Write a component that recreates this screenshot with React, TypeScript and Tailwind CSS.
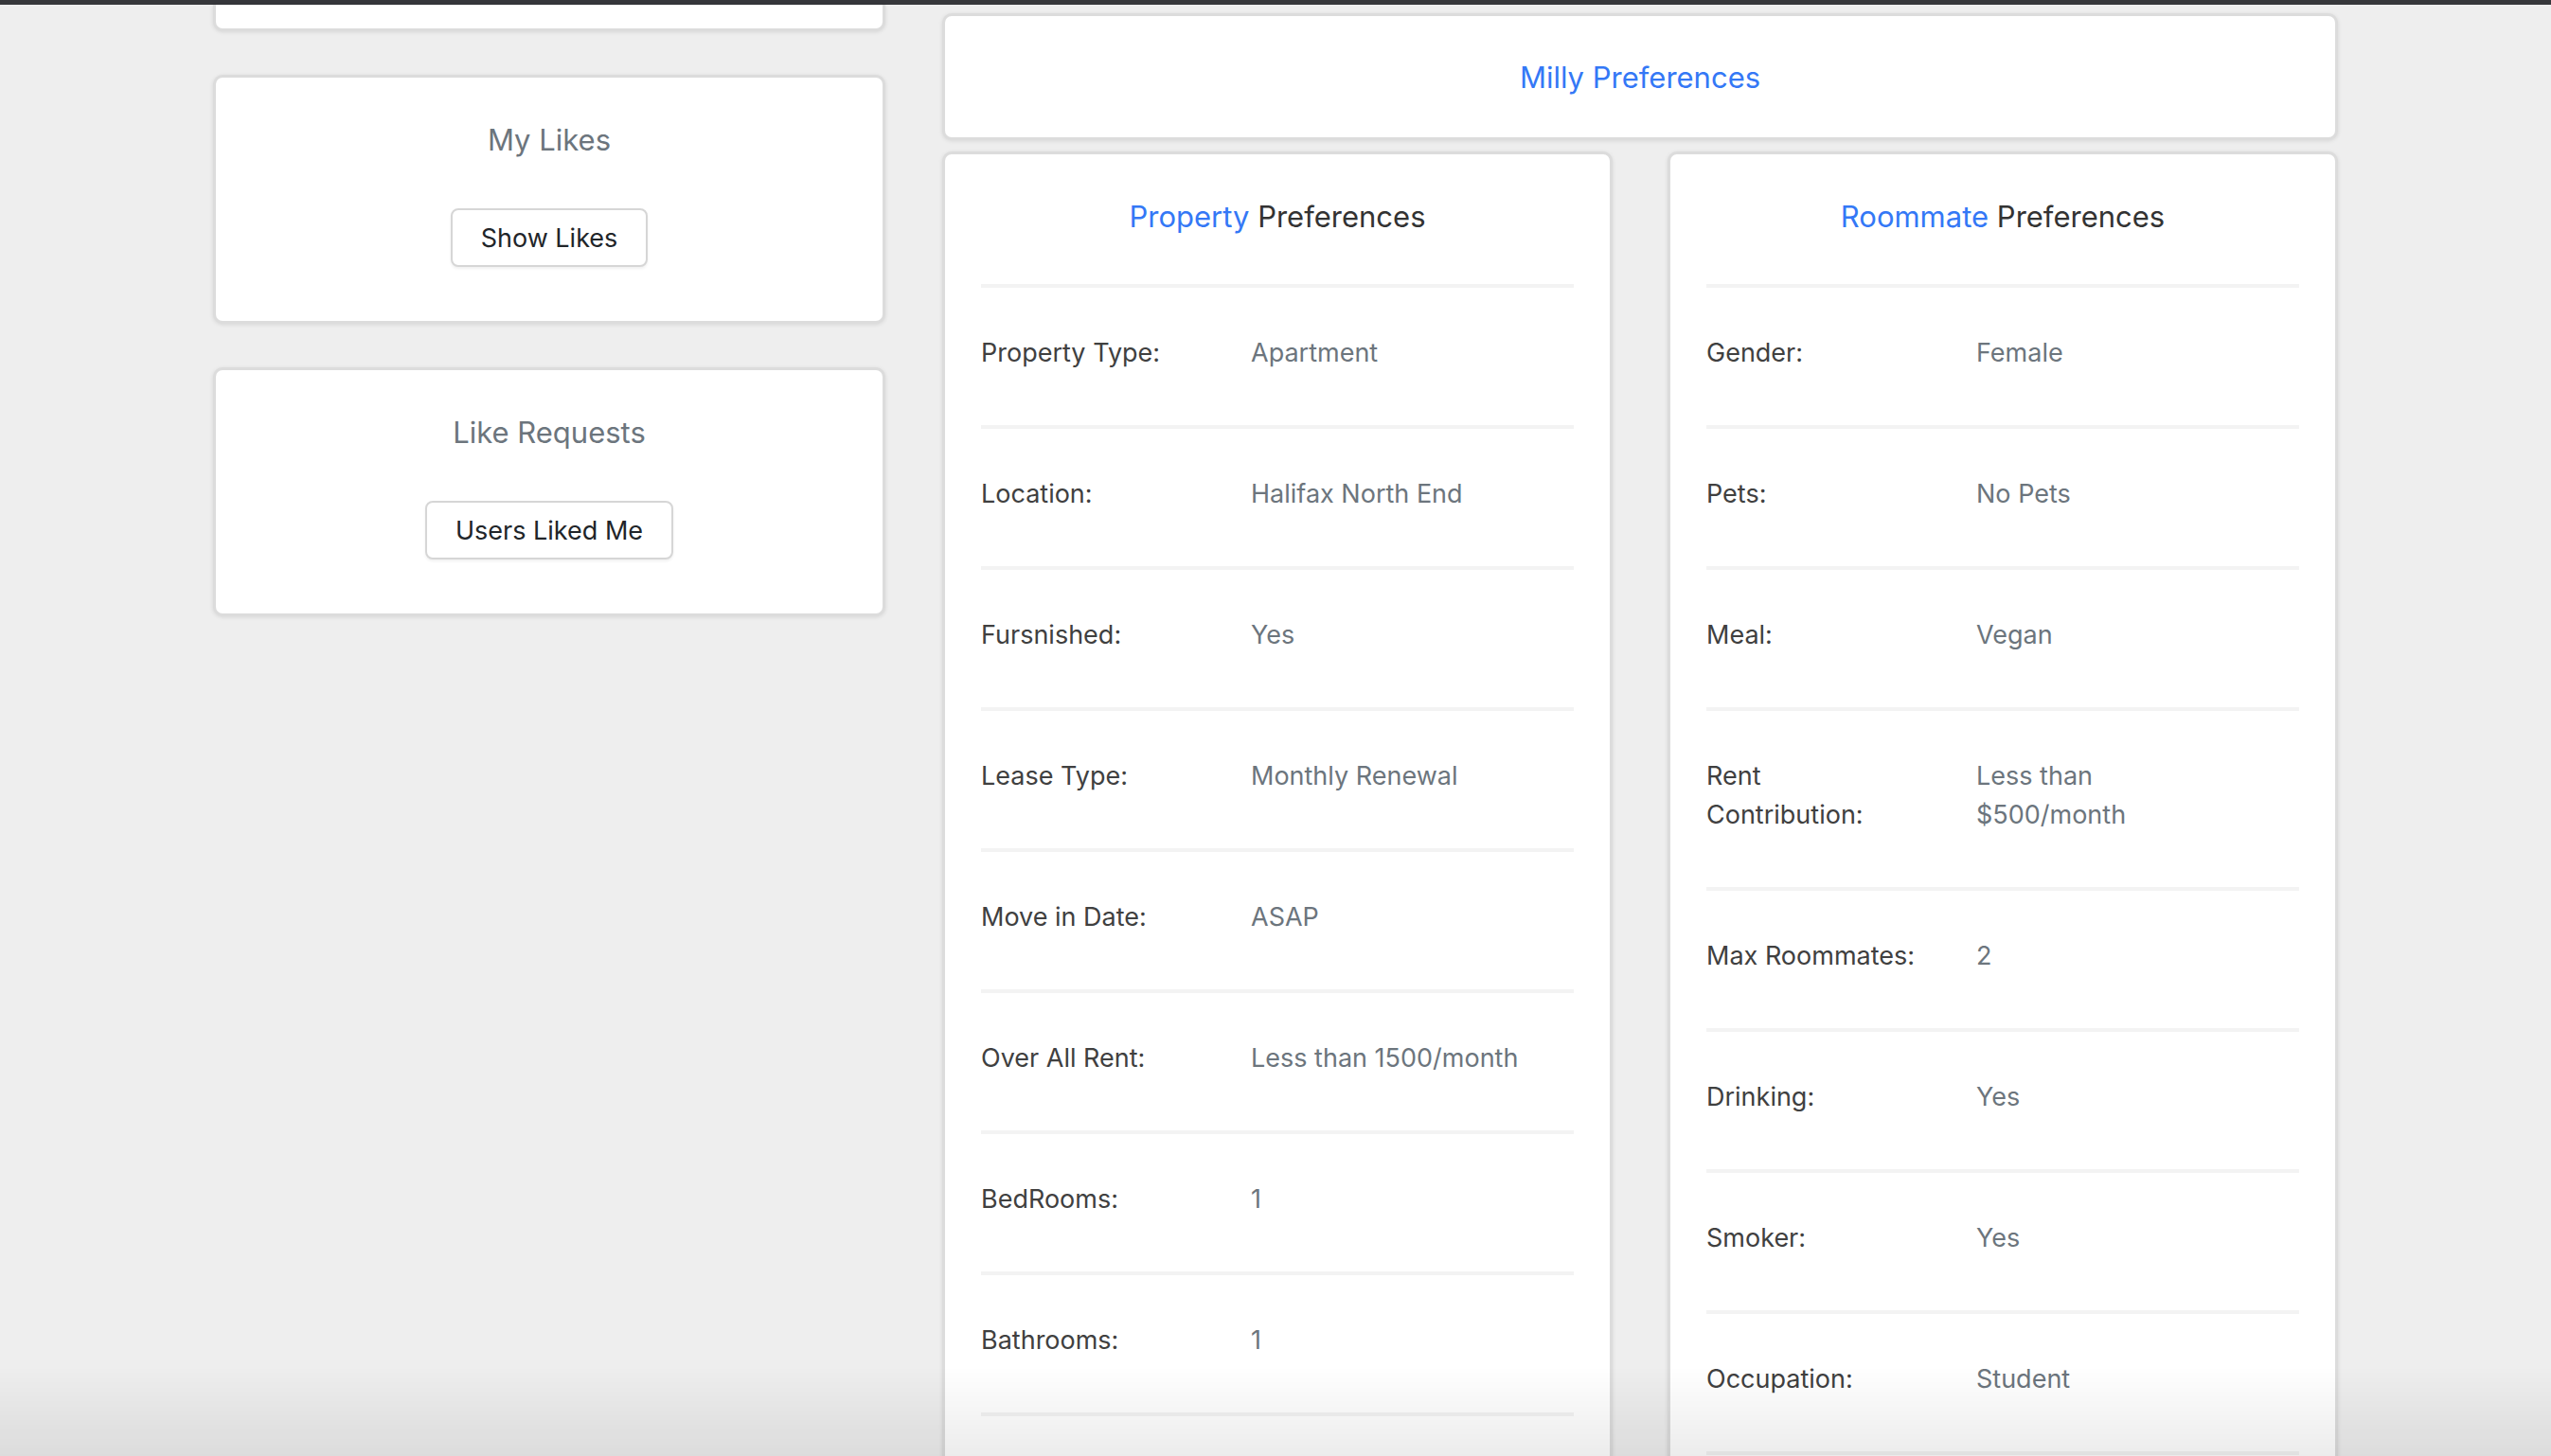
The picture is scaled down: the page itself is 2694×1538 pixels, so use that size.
import React from "react";

const font = { fontFamily: "Inter, 'Noto Sans', 'Liberation Sans', sans-serif" };

type Row = { label: React.ReactNode; value: React.ReactNode };

const propertyRows: Row[] = [
  { label: "Property Type:", value: "Apartment" },
  { label: "Location:", value: "Halifax North End" },
  { label: "Fursnished:", value: "Yes" },
  { label: "Lease Type:", value: "Monthly Renewal" },
  { label: "Move in Date:", value: "ASAP" },
  { label: "Over All Rent:", value: "Less than 1500/month" },
  { label: "BedRooms:", value: "1" },
  { label: "Bathrooms:", value: "1" },
];

const roommateRows: Row[] = [
  { label: "Gender:", value: "Female" },
  { label: "Pets:", value: "No Pets" },
  { label: "Meal:", value: "Vegan" },
  {
    label: (
      <>
        Rent
        <br />
        Contribution:
      </>
    ),
    value: (
      <>
        Less than
        <br />
        $500/month
      </>
    ),
  },
  { label: "Max Roommates:", value: "2" },
  { label: "Drinking:", value: "Yes" },
  { label: "Smoker:", value: "Yes" },
  { label: "Occupation:", value: "Student" },
];

const card =
  "bg-white border-[3px] border-[#dcdcdc] rounded-[10px] shadow-[0_1px_4px_rgba(0,0,0,0.10)]";

function LeftCard({ title, button }: { title: string; button: string }) {
  return (
    <div className={`${card} flex flex-col items-center pt-[47px] pb-[57px]`}>
      <div className="text-[31px] leading-[37px] text-[#6c757d] mb-[54px]">{title}</div>
      <button className="bg-white border-2 border-[#d6d6d6] rounded-[8px] px-[30px] py-[8.5px] text-[27px] leading-[41px] text-[#212529] shadow-[0_2px_3px_rgba(0,0,0,0.06)]">
        {button}
      </button>
    </div>
  );
}

function Divider() {
  return <div className="h-[4px] bg-[#f3f3f3]" />;
}

function PrefCard({ accent, rows }: { accent: string; rows: Row[] }) {
  return (
    <div className={`${card} w-[708px] px-[38px] pt-[47px] pb-[60px]`}>
      <div className="text-center text-[31px] leading-[37px] mb-[53px]">
        <span className="text-[#3478f6]">{accent}</span>{" "}
        <span className="text-[#333333]">Preferences</span>
      </div>
      <Divider />
      {rows.map((r, i) => (
        <div key={i}>
          <div className="flex pt-[48px] pb-[56px] text-[27px] leading-[41px]">
            <div className="w-[285px] shrink-0 text-[#404040]">{r.label}</div>
            <div className="text-[#6c757d]">{r.value}</div>
          </div>
          <Divider />
        </div>
      ))}
    </div>
  );
}

export default function App() {
  return (
    <div className="min-h-screen bg-[#eeeeee] overflow-hidden" style={font}>
      <div className="h-[5px] bg-[#36373b]" />
      <div className="flex items-start gap-[60px] px-[225px]">
        <div className="w-[710px] shrink-0 flex flex-col gap-[46px]">
          <div className="h-[28px] bg-white border-[3px] border-t-0 border-[#dcdcdc] rounded-b-[10px] shadow-[0_1px_4px_rgba(0,0,0,0.10)]" />
          <LeftCard title="My Likes" button="Show Likes" />
          <LeftCard title="Like Requests" button="Users Liked Me" />
        </div>
        <div className="w-[1474px] shrink-0 flex flex-col gap-[12px] pt-[9px]">
          <div className={`${card} py-[45.5px] text-center`}>
            <div className="text-[31px] leading-[37px] text-[#3478f6]">Milly Preferences</div>
          </div>
          <div className="flex gap-[58px] items-start">
            <PrefCard accent="Property" rows={propertyRows} />
            <PrefCard accent="Roommate" rows={roommateRows} />
          </div>
        </div>
      </div>
      <div className="pointer-events-none fixed inset-x-0 bottom-0 h-[95px] bg-gradient-to-b from-transparent to-[rgba(0,0,0,0.075)]" />
    </div>
  );
}
